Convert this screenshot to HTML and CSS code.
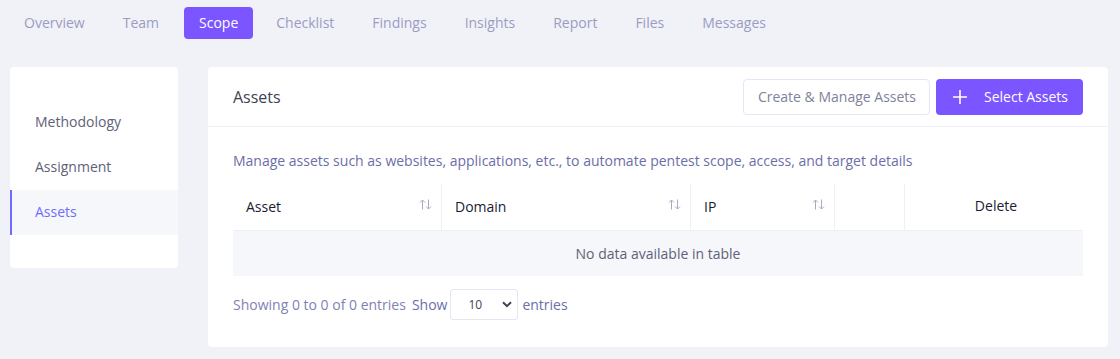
FILE: index.html
```html
<!DOCTYPE html>
<html lang="en">
<head>
  <meta charset="UTF-8">
  <title>Scope - Assets</title>
  <link rel="stylesheet" href="styles.css">
</head>
<body>
  <!-- project tabs -->
  <nav class="tabs">
    <a class="tab">Overview</a>
    <a class="tab">Team</a>
    <a class="tab active">Scope</a>
    <a class="tab">Checklist</a>
    <a class="tab">Findings</a>
    <a class="tab">Insights</a>
    <a class="tab">Report</a>
    <a class="tab">Files</a>
    <a class="tab">Messages</a>
  </nav>

  <div class="content">
    <aside class="side-card">
      <div class="side-item">Methodology</div>
      <div class="side-item">Assignment</div>
      <div class="side-item active">Assets</div>
    </aside>

    <section class="main-card">
      <div class="card-head">
        <h3 class="card-title">Assets</h3>
        <div class="actions">
          <button class="btn btn-light">Create &amp; Manage Assets</button>
          <button class="btn btn-primary">
            <svg class="plus" width="14" height="14" viewBox="0 0 14 14"><path d="M7 0v14M0 7h14" stroke="#fff" stroke-width="1.6"/></svg>
            Select Assets
          </button>
        </div>
      </div>
      <div class="card-body">
        <p class="desc">Manage assets such as websites, applications, etc., to automate pentest scope, access, and target details</p>
        <table class="grid">
          <thead>
            <tr>
              <th class="c-asset"><span>Asset</span><svg class="sort" width="13" height="11" viewBox="0 0 13 11"><path d="M3.5 10.5V1M1 3.5L3.5 1L6 3.5M9.5 0.5V10M7 7.5L9.5 10L12 7.5" fill="none" stroke="#a9abbf" stroke-width="1"/></svg></th>
              <th class="c-domain"><span>Domain</span><svg class="sort" width="13" height="11" viewBox="0 0 13 11"><path d="M3.5 10.5V1M1 3.5L3.5 1L6 3.5M9.5 0.5V10M7 7.5L9.5 10L12 7.5" fill="none" stroke="#a9abbf" stroke-width="1"/></svg></th>
              <th class="c-ip"><span>IP</span><svg class="sort" width="13" height="11" viewBox="0 0 13 11"><path d="M3.5 10.5V1M1 3.5L3.5 1L6 3.5M9.5 0.5V10M7 7.5L9.5 10L12 7.5" fill="none" stroke="#a9abbf" stroke-width="1"/></svg></th>
              <th class="c-blank"></th>
              <th class="c-delete">Delete</th>
            </tr>
          </thead>
          <tbody>
            <tr><td colspan="5" class="empty">No data available in table</td></tr>
          </tbody>
        </table>
        <div class="table-foot">
          <span class="info">Showing 0 to 0 of 0 entries</span>
          <label class="len">Show
            <span class="select-wrap">
              <select>
                <option>10</option>
                <option>25</option>
                <option>50</option>
                <option>100</option>
              </select>
              <svg class="chev" width="10" height="7" viewBox="0 0 10 7"><path d="M1 1.2L5 5.2L9 1.2" fill="none" stroke="#3f4254" stroke-width="2"/></svg>
            </span>
            entries</label>
        </div>
      </div>
    </section>
  </div>
</body>
</html>
```

FILE: styles.css
```css
body {
  margin: 0;
  background: #f1f2f8;
  font-family: "Open Sans", "Liberation Sans", sans-serif;
  font-size: 14px;
}

.tabs { display: flex; padding: 7px 0 0 9px; }
.tab {
  display: block;
  height: 32px; line-height: 32px;
  padding: 0 15px; margin-right: 8px;
  border-radius: 4px;
  color: #9a9cc2; font-weight: 500;
  cursor: pointer;
}
.tab:nth-child(2) { margin-right: 10px; }
.tab.active { background: #7b55ff; color: #fff; }

.content { display: flex; gap: 30px; padding: 28px 12px 0 10px; }

.side-card {
  width: 168px; flex: none;
  align-self: flex-start;
  background: #fff; border-radius: 4px;
  padding: 33px 0;
}
.side-item {
  height: 45px; line-height: 44px;
  padding-left: 25px;
  color: #5e6278; font-weight: 500;
}
.side-item.active {
  background: #f6f7fb; color: #6f6cff;
  border-left: 2px solid #6f6cff; padding-left: 23px;
}

.main-card { flex: 1; background: #fff; border-radius: 4px; }
.card-head {
  display: flex; align-items: center; justify-content: space-between;
  height: 59px; padding: 0 25px;
  border-bottom: 1px solid #eff0f7;
}
.card-title { margin: 0; font-size: 16px; font-weight: 500; color: #3f4254; }
.actions { display: flex; gap: 6px; }
.btn {
  height: 36px;
  border-radius: 4px;
  font-family: inherit; font-size: 14px;
  display: flex; align-items: center;
  cursor: pointer;
}
.btn-light { background: #fff; border: 1px solid #e4e6f6; color: #7e8299; padding: 0 13px 0 14px; }
.btn-primary { background: #7b55ff; border: 0; color: #fff; padding: 0 15px 0 17px; }
.plus { margin-right: 17px; }

.card-body { padding: 24px 25px 27px; }
.desc { margin: 0 0 13px; line-height: 20px; color: #6b6ea8; }

.grid { width: 100%; border-collapse: collapse; table-layout: fixed; }
.grid th {
  height: 43px; padding: 0 9px 3px 13px;
  text-align: left; font-weight: 500; color: #181c32;
  border-right: 1px solid #eff0f4;
  border-bottom: 1px solid #eff0f4;
}
.grid th:last-child { border-right: 0; text-align: center; }
.grid th span { vertical-align: middle; }
.sort { float: right; margin-top: 4px; }
.c-asset { width: 186px; }
.c-domain { width: 226px; }
.c-ip { width: 121px; }
.c-blank { width: 47px; }
.empty {
  height: 45px; padding: 0;
  background: #f6f7fa;
  text-align: center; color: #5e6278;
}

.table-foot { display: flex; align-items: center; margin-top: 13px; color: #7e82b3; }
.info { margin-right: 6px; }
.len { display: flex; align-items: center; color: #6b6ea8; }
.select-wrap { position: relative; margin: 0 4px 0 3px; }
.select-wrap select {
  appearance: none;
  width: 68px; height: 31px;
  padding: 0 0 0 17px;
  border: 1px solid #e4e6ef; border-radius: 3px;
  background: #fff;
  font-family: inherit; font-size: 12px; color: #3f4254;
}
.chev { position: absolute; right: 6px; top: 12px; pointer-events: none; }
```
